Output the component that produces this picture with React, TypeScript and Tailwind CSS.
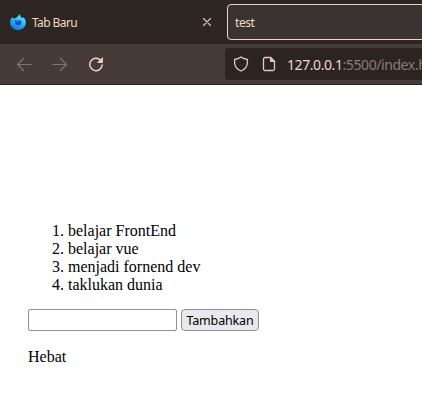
import type { ReactNode } from 'react';

const items = ['belajar FrontEnd', 'belajar vue', 'menjadi fornend dev', 'taklukan dunia'];

function Icon({ className, children }: { className: string; children: ReactNode }) {
  return (
    <svg viewBox="0 0 16 16" fill="none" stroke="currentColor" strokeLinecap="round" strokeLinejoin="round" className={`h-4 w-4 shrink-0 ${className}`}>
      {children}
    </svg>
  );
}

function FirefoxLogo() {
  return (
    <svg viewBox="0 0 16 16" className="h-4 w-4 shrink-0">
      <defs>
        <linearGradient id="flame" x1="0.8" y1="0" x2="0.3" y2="1">
          <stop offset="0" stopColor="#7df0f5" />
          <stop offset="0.45" stopColor="#2bbcfa" />
          <stop offset="1" stopColor="#0b7aec" />
        </linearGradient>
      </defs>
      <path d="M10.300 0c-.5 1.500-.2 2.200.7 3.100l1.900 1.300.4-1.500c1.500 1.500 2.500 3.400 2.500 5.500 0 4.200-3.400 7.500-7.800 7.500S.2 12.600.2 8.400c0-2.400.8-4.200 2.200-5.500l.4 1.700c.8-.4 1.700-.5 2.500-.3L7 3.100c1-.5 1.500-1.900 3.300-3.100z" fill="url(#flame)" />
      <path d="M5 6.500l2.300-.3L6.200 7.700c1.200.3 2-.4 3.300-1.700 1.400.5 2.100 1.700 1.800 3-.4 1.600-1.900 2.400-3.500 2.200C6 11 4.800 9.300 5 6.500z" fill="#1749ae" />
    </svg>
  );
}

export default function App() {
  return (
    <div className="flex h-[408px] w-[422px] flex-col overflow-hidden bg-white">
      <header className="shrink-0 border-b border-[#271f1c] bg-[#2d2623] font-['Noto_Sans','Open_Sans',sans-serif] text-[#f4d6c8]">
        <div className="flex h-11 pt-1">
          <div className="flex h-9 w-[227px] shrink-0 items-center pl-2.5 pr-3">
            <FirefoxLogo />
            <span className="ml-1.5 flex-1 pt-[2px] text-[12px] tracking-[-0.6px]">Tab Baru</span>
            <Icon className="text-[#e5cabf]">
              <path d="M4.500 4.500l7 7m0-7l-7 7" strokeWidth="1.100" />
            </Icon>
          </div>
          <div className="flex h-9 w-60 shrink-0 items-center rounded-[4px] border border-[#f4d0c3] bg-[#393432] pl-[7px] pt-[2px] text-[12px] tracking-[-0.45px]">
            test
          </div>
        </div>
        <div className="flex h-10 items-center bg-[#463b36] pl-4">
          <div className="flex w-[209px] shrink-0 gap-5">
            <Icon className="text-[#85736c]">
              <path d="M15 8.500H1.500m6-6l-6 6 6 6" strokeWidth="1.200" />
            </Icon>
            <Icon className="text-[#85736c]">
              <path d="M1 8.500h13.500m-6-6l6 6-6 6" strokeWidth="1.200" />
            </Icon>
            <Icon className="text-[#f4d6c8]">
              <path d="M12.500 4.200A6.200 6.200 0 1 0 14.200 9" strokeWidth="1.400" />
              <path d="M14.500 2v4.500H10z" fill="currentColor" strokeWidth=".8" />
            </Icon>
          </div>
          <div className="flex h-8 w-[197px] shrink-0 items-center overflow-hidden rounded-l-[4px] bg-[#2b2421] pl-2">
            <Icon className="text-[#e5cabf]">
              <path d="M8 1c1.800 1.300 3.900 2.200 6.400 2.500v3c0 4-2.400 6.800-6.400 8.500-4-1.700-6.400-4.500-6.400-8.500v-3C4.100 3.200 6.200 2.300 8 1z" strokeWidth="1.300" />
            </Icon>
            <Icon className="ml-3 text-[#e5cabf]">
              <path d="M4 1.500h5.500L13.500 5.500v7.500a1.500 1.500 0 0 1-1.500 1.500H4A1.500 1.500 0 0 1 2.500 13V3A1.500 1.500 0 0 1 4 1.500z" strokeWidth="1.300" />
              <path d="M9.500 1.500v4h4z" fill="currentColor" />
            </Icon>
            <span className="ml-[10px] whitespace-nowrap pt-px text-[14px] tracking-[-0.42px]">
              127.0.0.1<span className="text-[#907b73]">:5500/index.h</span>
            </span>
          </div>
        </div>
      </header>
      <main className="px-7 pt-[137px] font-['Liberation_Serif',serif] text-[16px] leading-[18px] text-black">
        <ol className="list-decimal pl-10">
          {items.map((item) => (
            <li key={item}>{item}</li>
          ))}
        </ol>
        <div className="mt-[15px] flex gap-1">
          <input aria-label="Kegiatan" className="h-[22px] w-[149px] rounded-[2px] border border-[#8f8f9d] bg-white px-1" />
          <button className="h-[22px] w-[78px] rounded-[4px] border border-[#8f8f9d] bg-[#e9e9ed] pt-px font-['Noto_Sans','Open_Sans',sans-serif] text-[12.500px] leading-[19px] tracking-[-0.15px]">
            Tambahkan
          </button>
        </div>
        <p className="mt-[17px]">Hebat</p>
      </main>
    </div>
  );
}
